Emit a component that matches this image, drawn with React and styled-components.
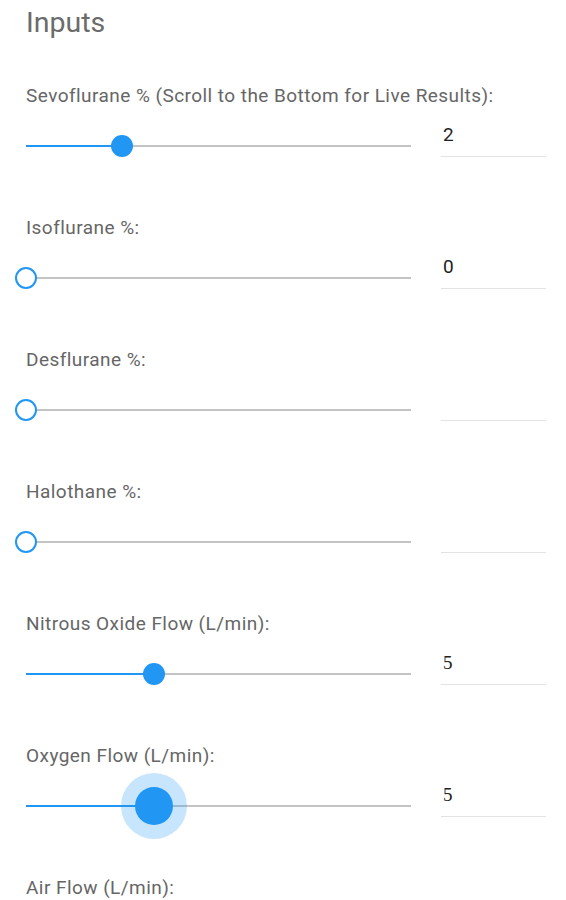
import React from 'react'
import styled, { createGlobalStyle } from 'styled-components'

const GlobalStyle = createGlobalStyle`
	body {
		margin: 0;
		background: #ffffff;
		font-family: Roboto, "Liberation Sans", sans-serif;
	}
`

const fields = [
	{ label: 'Sevoflurane % (Scroll to the Bottom for Live Results):', value: 2, max: 8, text: '2' },
	{ label: 'Isoflurane %:', value: 0, max: 5, text: '0' },
	{ label: 'Desflurane %:', value: 0, max: 18, text: '' },
	{ label: 'Halothane %:', value: 0, max: 5, text: '' },
	{ label: 'Nitrous Oxide Flow (L/min):', value: 5, max: 15, text: '5', serif: true },
	{ label: 'Oxygen Flow (L/min):', value: 5, max: 15, text: '5', serif: true, active: true },
	{ label: 'Air Flow (L/min):', value: 0, max: 15, text: '', hideRow: true },
]

const Slider = ({ value, max, active }) => {
	const pct = (value / max) * 100
	return (
		<SliderWrapper>
			<Filled style={{ width: `${pct}%` }} />
			<Rest />
			<Thumb style={{ left: `${pct}%` }} $empty={value === 0} $active={active} />
		</SliderWrapper>
	)
}

const App = () => {
	return (
		<Page>
			<GlobalStyle />
			<Heading>Inputs</Heading>
			{fields.map((f) => (
				<Field key={f.label}>
					<Label>{f.label}</Label>
					{!f.hideRow && (
						<Row>
							<Slider value={f.value} max={f.max} active={f.active} />
							<ValueInput readOnly value={f.text} $serif={f.serif} />
						</Row>
					)}
				</Field>
			))}
		</Page>
	)
}

const Page = styled.div`
	padding: 5px 21px 0 26px;
	height: 900px;
	box-sizing: border-box;
	overflow: hidden;
`

const Heading = styled.h2`
	margin: 0 0 43px;
	font-size: 28.5px;
	line-height: 36px;
	font-weight: 400;
	color: #6b6b6b;
`

const Field = styled.div`
	display: flex;
	flex-direction: column;
	gap: 18px;
	margin-bottom: 50px;
`

const Label = styled.div`
	font-size: 19px;
	line-height: 24px;
	letter-spacing: 0.45px;
	color: #666666;
`

const Row = styled.div`
	display: flex;
	align-items: flex-start;
	gap: 30px;
`

const SliderWrapper = styled.div`
	position: relative;
	display: flex;
	align-items: center;
	width: 385px;
	height: 40px;
	flex-shrink: 0;
`

const Filled = styled.div`
	height: 2px;
	background: #2196f3;
`

const Rest = styled.div`
	flex: 1;
	height: 2px;
	background: #c4c4c4;
`

const Thumb = styled.div`
	position: absolute;
	top: 50%;
	width: ${(p) => (p.$active ? '38px' : '22px')};
	height: ${(p) => (p.$active ? '38px' : '22px')};
	box-sizing: border-box;
	border-radius: 50%;
	transform: translate(-50%, -50%);
	background: ${(p) => (p.$empty ? '#ffffff' : '#2196f3')};
	border: ${(p) => (p.$empty ? '2px solid #2196f3' : 'none')};
	box-shadow: ${(p) => (p.$active ? '0 0 0 14px rgba(33, 150, 243, 0.25)' : 'none')};
`

const ValueInput = styled.input`
	width: 103px;
	margin-top: -2px;
	padding: 0 0 10px 2px;
	border: none;
	border-bottom: 1px solid #e3e3e3;
	outline: none;
	background: transparent;
	font-family: ${(p) => (p.$serif ? '"Liberation Serif", "Times New Roman", serif' : 'Roboto, "Liberation Sans", sans-serif')};
	font-size: 19px;
	line-height: 22px;
	color: #222222;
`

export default App
